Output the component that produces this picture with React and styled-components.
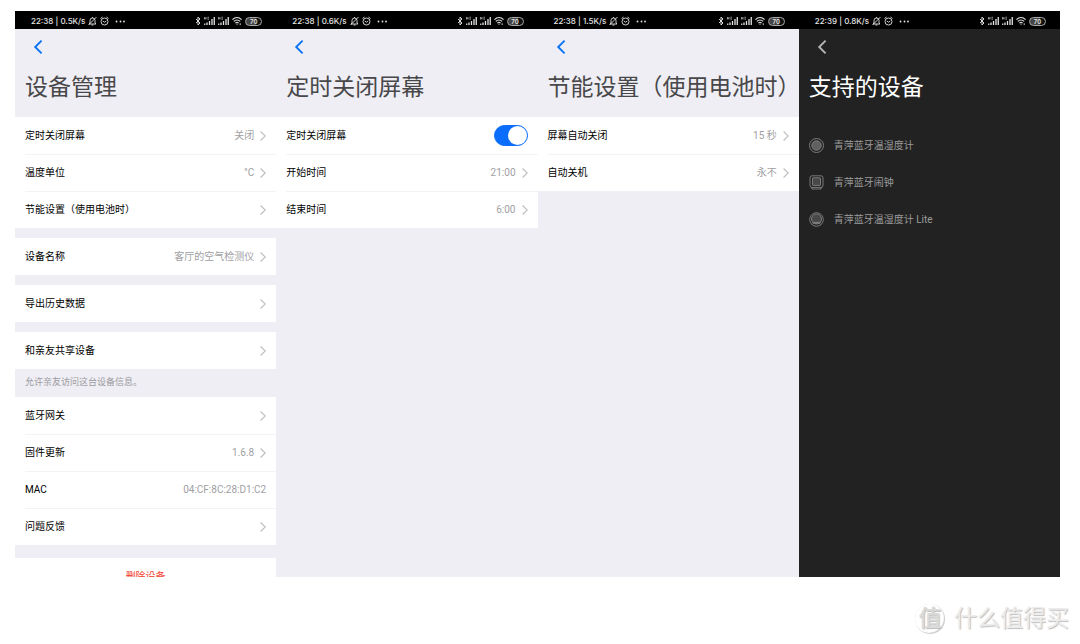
import React, { useState } from "react";
import styled, { createGlobalStyle } from "styled-components";

const GlobalStyle = createGlobalStyle`
  * {
    box-sizing: border-box;
  }
  body {
    margin: 0;
    background: #fff;
    font-family: Roboto, "Noto Sans CJK SC", sans-serif;
  }
`;

const Page = styled.div`
  display: flex;
  flex-direction: column;
  height: 100vh;
  padding: 11px 20px 0 15px;
`;

const Screens = styled.main`
  flex: 1;
  min-height: 0;
  display: grid;
  grid-template-columns: repeat(4, minmax(0, 1fr));
  overflow: hidden;
`;

const Screen = styled.section`
  min-width: 0;
  background: ${props => (props.$dark ? "#222222" : "#efeef4")};
  color: ${props => (props.$dark ? "#9c9c9c" : "#000")};
`;

const StatusBar = styled.div`
  display: flex;
  align-items: center;
  justify-content: space-between;
  height: 18px;
  padding: 2px 14px 0 16px;
  background: #000;
  color: #e4e4e4;
  font-family: Inter, sans-serif;
  font-size: 8px;
  font-weight: 500;
  line-height: 16px;
  white-space: nowrap;
`;

const StatusSide = styled.div`
  display: flex;
  align-items: center;
  gap: 3px;
  svg {
    display: block;
  }
`;

const More = styled.span`
  display: flex;
  padding-left: 3px;
`;

const Header = styled.header`
  height: 88px;
  padding: 10px 0 0 10px;
`;

const BackButton = styled.button`
  display: flex;
  width: 26px;
  height: 16px;
  padding: 0 0 0 8px;
  border: 0;
  background: none;
  color: ${props => (props.$dark ? "#b4b4b4" : "#0a74f5")};
  cursor: pointer;
`;

const Title = styled.h1`
  margin: 16px 0 0;
  font-size: 23px;
  line-height: 34px;
  font-weight: 400;
  white-space: nowrap;
  color: ${props => (props.$dark ? "#fff" : "#48484a")};
`;

const Group = styled.div`
  margin-bottom: ${props => props.$gap ?? 10}px;
  background: #fff;
`;

const rowStyles = `
  display: flex;
  align-items: center;
  width: 100%;
  height: 37px;
  padding: 0 10px;
  border: 0;
  background: none;
  color: inherit;
  font-family: inherit;
  font-size: 10px;
  line-height: 16px;
  text-align: left;
`;

const RowButton = styled.button`
  ${rowStyles}
  cursor: pointer;
  & + & {
    background: linear-gradient(#f3f3f5, #f3f3f5) 10px 0 / 100% 1px no-repeat;
  }
`;

const SwitchRow = styled.label`
  ${rowStyles}
  & + ${RowButton} {
    background: linear-gradient(#f3f3f5, #f3f3f5) 10px 0 / 100% 1px no-repeat;
  }
`;

const Label = styled.span`
  flex: 1;
  white-space: nowrap;
`;

const Value = styled.span`
  color: #a0a0a3;
  white-space: nowrap;
`;

const RowArrow = styled.svg`
  display: block;
  margin-left: 6px;
  color: #bcbcc0;
`;

const Note = styled.p`
  margin: 0;
  height: 28px;
  padding: 0 10px;
  font-size: 9px;
  line-height: 26px;
  color: #9b9ba1;
`;

const DeleteButton = styled.button`
  ${rowStyles}
  justify-content: center;
  background: #fff;
  color: #f2402f;
  cursor: pointer;
`;

const Switch = styled.input`
  appearance: none;
  display: flex;
  width: 34px;
  height: 21px;
  margin: 0;
  border: 1px solid ${props => (props.checked ? "#0b6dfb" : "#ccc")};
  border-radius: 11px;
  background: ${props => (props.checked ? "#0b6dfb" : "#ccc")};
  justify-content: ${props => (props.checked ? "flex-end" : "flex-start")};
  cursor: pointer;
  &::before {
    content: "";
    width: 19px;
    height: 19px;
    border-radius: 50%;
    background: #fff;
  }
`;

const DeviceList = styled.ul`
  margin: 0;
  padding: 10px 10px 0;
  list-style: none;
`;

const Device = styled.li`
  display: flex;
  align-items: center;
  gap: 10px;
  height: 37px;
  font-size: 10px;
  line-height: 16px;
`;

const Footer = styled.footer`
  display: flex;
  align-items: center;
  justify-content: flex-end;
  gap: 9px;
  height: 67px;
  padding-top: 16px;
  margin-right: -9px;
  color: #ececec;
  font-size: 23px;
  line-height: 30px;
  text-shadow: 1px 1px 1px #bdbdbd;
  white-space: nowrap;
`;

const Seal = styled.span`
  display: grid;
  place-items: center;
  width: 30px;
  height: 30px;
  border-radius: 50%;
  box-shadow: inset -1px -1px 1px #c8c8c8, 0 0 1px #e4e4e4;
  color: #dadada;
  font-weight: 500;
`;

const MuteIcon = () => (
  <svg width="9" height="10" viewBox="0 0 18 20" fill="none" stroke="currentColor" strokeWidth="1.8">
    <path d="M4 14V9a5 5 0 0 1 10 0v5l2 2H2zM7 18h4M9 4V2" />
    <path d="M17 2 1 18" />
  </svg>
);

const AlarmIcon = () => (
  <svg width="9" height="10" viewBox="0 0 18 20" fill="none" stroke="currentColor" strokeWidth="1.8">
    <circle cx="9" cy="11" r="7" />
    <path d="M1 5l4-3M17 5l-4-3M5.5 10 9 12.5l3.5-2.5" />
  </svg>
);

const DotsIcon = () => (
  <svg width="10" height="10" viewBox="0 0 10 10" fill="currentColor">
    <circle cx="1.5" cy="5.5" r=".9" />
    <circle cx="5.5" cy="5.5" r=".9" />
    <circle cx="9" cy="5.5" r=".9" />
  </svg>
);

const BluetoothIcon = () => (
  <svg width="6" height="10" viewBox="0 0 12 20" fill="none" stroke="currentColor" strokeWidth="1.9">
    <path d="M2 6l8 8-4 4V2l4 4-8 8" />
  </svg>
);

const SignalIcon = () => (
  <svg width="11" height="10" viewBox="0 0 22 20" fill="none" stroke="currentColor">
    <path d="M1 2v5M1 4.5h3M4 2v5M7 2.5h3M7 4.5h2M7 6.5h3" strokeWidth="1.2" />
    <path d="M6 18v-5M11 18v-8M16 18V6M20.5 18V2" strokeWidth="2.6" />
    <path d="M1.5 18v-3" strokeWidth="2.4" />
  </svg>
);

const WifiIcon = () => (
  <svg width="10" height="10" viewBox="0 0 22 20" fill="none" stroke="currentColor" strokeWidth="2.4">
    <path d="M1 7c6-6 14-6 20 0M4 11c4-4 10-4 14 0M7.5 14.5c2-2 5-2 7 0" />
    <path d="M9 16h4l-2 3z" fill="currentColor" stroke="none" />
    <path d="M18 15v4" strokeWidth="2" />
  </svg>
);

const Battery = styled.span`
  display: block;
  width: 17px;
  height: 9px;
  border: 1px solid #a8a8a8;
  border-radius: 5px;
  background: linear-gradient(90deg, #444 70%, #111 70%);
  font-size: 6px;
  line-height: 7px;
  font-weight: 600;
  text-align: center;
`;

const Arrow = () => (
  <RowArrow width="6" height="12" viewBox="0 0 6 12" fill="none" stroke="currentColor" strokeWidth="1.1">
    <path d="M.6 1.5 5.3 6 .6 10.5" />
  </RowArrow>
);

const deviceIcons = {
  round: (
    <>
      <circle cx="7.5" cy="7.5" r="7" />
      <circle cx="7.5" cy="7.5" r="4.7" fill="#606060" />
    </>
  ),
  clock: (
    <>
      <rect x="1" y=".8" width="13" height="11.6" rx="2" />
      <rect x="3.5" y="2.8" width="8" height="7.6" rx=".6" fill="#484848" />
      <path d="M2.4 12.4l.6 1.6h9l.6-1.6" />
    </>
  ),
  lite: (
    <>
      <circle cx="7.5" cy="7.5" r="6.8" />
      <circle cx="7.5" cy="7" r="5" fill="#484848" />
      <path d="M3.5 10.4h8M3 12.6l1.4-1.4h6.2l1.4 1.4" />
    </>
  )
};

const DeviceIcon = ({ type }) => (
  <svg width="15" height="15" viewBox="0 0 15 15" fill="none" stroke="#858585" strokeWidth=".9">
    {deviceIcons[type]}
  </svg>
);

const Phone = ({ time, speed, title, dark, children }) => (
  <Screen $dark={dark}>
    <StatusBar>
      <StatusSide>
        <span>
          {time} | {speed}
        </span>
        <MuteIcon />
        <AlarmIcon />
        <More>
          <DotsIcon />
        </More>
      </StatusSide>
      <StatusSide>
        <BluetoothIcon />
        <SignalIcon />
        <SignalIcon />
        <WifiIcon />
        <Battery>70</Battery>
      </StatusSide>
    </StatusBar>
    <Header>
      <BackButton $dark={dark} aria-label="返回">
        <svg width="10" height="16" viewBox="0 0 10 16" fill="none" stroke="currentColor" strokeWidth="1.9">
          <path d="M8.6 1.6 2.2 8l6.4 6.4" />
        </svg>
      </BackButton>
      <Title $dark={dark}>{title}</Title>
    </Header>
    {children}
  </Screen>
);

const Row = ({ label, value, arrow = true }) => (
  <RowButton>
    <Label>{label}</Label>
    {value && <Value>{value}</Value>}
    {arrow && <Arrow />}
  </RowButton>
);

const devices = [
  { type: "round", name: "青萍蓝牙温湿度计" },
  { type: "clock", name: "青萍蓝牙闹钟" },
  { type: "lite", name: "青萍蓝牙温湿度计 Lite" }
];

const App = () => {
  const [scheduled, setScheduled] = useState(true);

  return (
    <>
      <GlobalStyle />
      <Page>
        <Screens>
          <Phone time="22:38" speed="0.5K/s" title="设备管理">
            <Group>
              <Row label="定时关闭屏幕" value="关闭" />
              <Row label="温度单位" value="°C" />
              <Row label="节能设置（使用电池时）" />
            </Group>
            <Group>
              <Row label="设备名称" value="客厅的空气检测仪" />
            </Group>
            <Group>
              <Row label="导出历史数据" />
            </Group>
            <Group $gap={0}>
              <Row label="和亲友共享设备" />
            </Group>
            <Note>允许亲友访问这台设备信息。</Note>
            <Group $gap={13}>
              <Row label="蓝牙网关" />
              <Row label="固件更新" value="1.6.8" />
              <Row label="MAC" value="04:CF:8C:28:D1:C2" arrow={false} />
              <Row label="问题反馈" />
            </Group>
            <DeleteButton>删除设备</DeleteButton>
          </Phone>

          <Phone time="22:38" speed="0.6K/s" title="定时关闭屏幕">
            <Group>
              <SwitchRow>
                <Label>定时关闭屏幕</Label>
                <Switch
                  type="checkbox"
                  role="switch"
                  checked={scheduled}
                  onChange={e => setScheduled(e.target.checked)}
                />
              </SwitchRow>
              <Row label="开始时间" value="21:00" />
              <Row label="结束时间" value="6:00" />
            </Group>
          </Phone>

          <Phone time="22:38" speed="1.5K/s" title="节能设置（使用电池时）">
            <Group>
              <Row label="屏幕自动关闭" value="15 秒" />
              <Row label="自动关机" value="永不" />
            </Group>
          </Phone>

          <Phone time="22:39" speed="0.8K/s" title="支持的设备" dark>
            <DeviceList>
              {devices.map(device => (
                <Device key={device.name}>
                  <DeviceIcon type={device.type} />
                  <span>{device.name}</span>
                </Device>
              ))}
            </DeviceList>
          </Phone>
        </Screens>
        <Footer>
          <Seal>值</Seal>
          <span>什么值得买</span>
        </Footer>
      </Page>
    </>
  );
};

export default App;
